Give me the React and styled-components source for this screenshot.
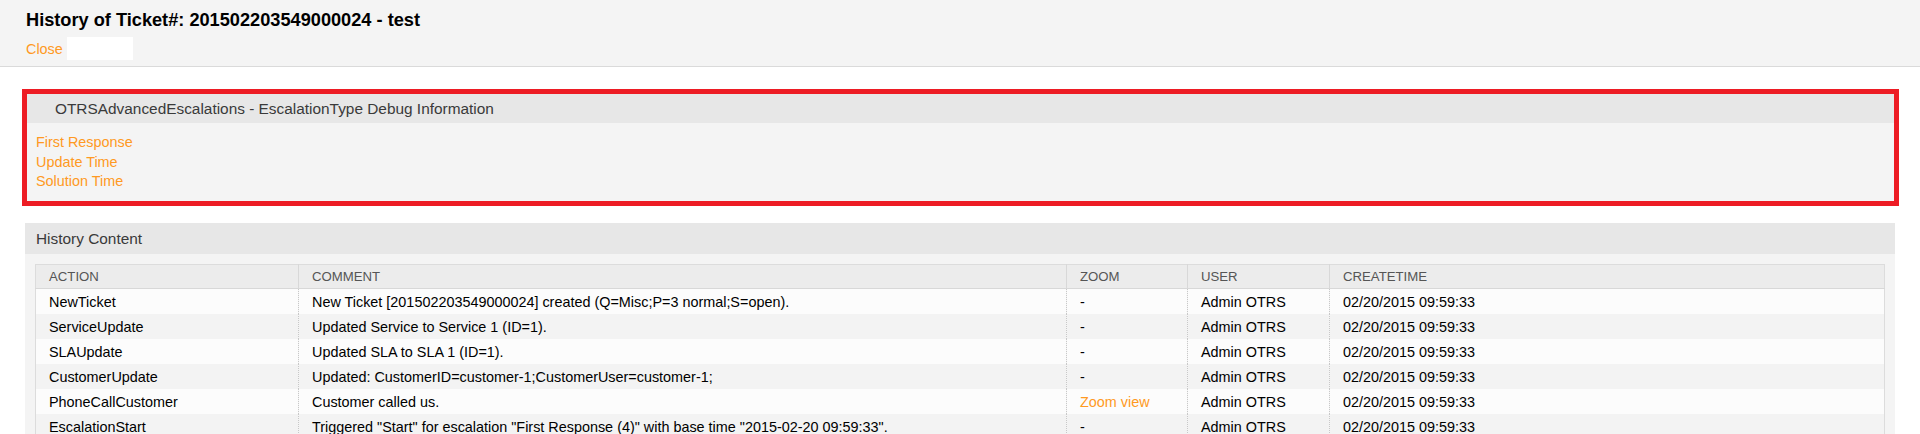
import React from "react";
import styled, { createGlobalStyle } from "styled-components";

const GlobalStyle = createGlobalStyle`
  html, body {
    margin: 0;
    padding: 0;
    background: #ffffff;
    font-family: "Liberation Sans", Arial, sans-serif;
    font-size: 14.4px;
    color: #000;
  }
`;

const Page = styled.div`
  width: 1920px;
  min-height: 434px;
`;

const Header = styled.header`
  background: #f4f4f4;
  border-bottom: 1px solid #dadada;
  padding: 10px 26px 6px;
`;

const Title = styled.h1`
  margin: 0 0 6px;
  font-size: 18.2px;
  line-height: 21px;
  font-weight: bold;
  color: #000;
`;

const ActionRow = styled.div`
  display: flex;
  align-items: center;
  gap: 4px;
  height: 23px;
`;

const Link = styled.a`
  color: #ff9922;
  text-decoration: none;
  font-size: 14.4px;
  cursor: pointer;
`;

const BlankField = styled.span`
  display: inline-block;
  width: 66px;
  height: 23px;
  background: #ffffff;
`;

const Content = styled.main`
  padding: 22px 25px 0;
  display: flex;
  flex-direction: column;
  gap: 17px;
`;

const Widget = styled.section`
  background: #f4f4f4;
  ${(p) =>
    p.$highlight &&
    `
    border: 5px solid #ed1c24;
    margin: 0 -4px 0 -3px;
  `}
`;

const WidgetHeader = styled.div`
  display: flex;
  align-items: center;
  height: ${(p) => p.$height}px;
  padding-left: ${(p) => p.$indent}px;
  background: #e7e7e7;
  color: #3a3a3a;
  font-size: 15.4px;
`;

const DebugBody = styled.div`
  padding: 10px 9px 9.5px;
  display: flex;
  flex-direction: column;
`;

const DebugLink = styled(Link)`
  line-height: 19.5px;
`;

const HistoryBody = styled.div`
  padding: 10px 11px 10px 10px;
`;

const Table = styled.table`
  width: 100%;
  table-layout: fixed;
  border-collapse: collapse;
  border: 1px solid #dcdcdc;
`;

const Th = styled.th`
  height: 23px;
  padding: 0 13px;
  text-align: left;
  font-weight: normal;
  font-size: 13.2px;
  color: #555;
  background: #ececec;
  border-right: 1px solid #d8d8d8;
  border-bottom: 1px solid #d8d8d8;
  text-transform: uppercase;
  &:last-child {
    border-right: none;
  }
`;

const Row = styled.tr`
  background: ${(p) => (p.$odd ? "#f3f3f3" : "#fcfcfc")};
`;

const Td = styled.td`
  height: 25px;
  padding: 0 13px;
  font-size: 14.4px;
  color: #000;
  white-space: nowrap;
  overflow: hidden;
  border-right: 1px dotted #c8c8c8;
  &:last-child {
    border-right: none;
  }
`;

const columns = [
  { key: "action", label: "Action", width: 263 },
  { key: "comment", label: "Comment", width: 768 },
  { key: "zoom", label: "Zoom", width: 121 },
  { key: "user", label: "User", width: 142 },
  { key: "time", label: "CreateTime", width: 555 },
];

const rows = [
  {
    action: "NewTicket",
    comment: "New Ticket [201502203549000024] created (Q=Misc;P=3 normal;S=open).",
    zoom: null,
  },
  { action: "ServiceUpdate", comment: "Updated Service to Service 1 (ID=1).", zoom: null },
  { action: "SLAUpdate", comment: "Updated SLA to SLA 1 (ID=1).", zoom: null },
  {
    action: "CustomerUpdate",
    comment: "Updated: CustomerID=customer-1;CustomerUser=customer-1;",
    zoom: null,
  },
  { action: "PhoneCallCustomer", comment: "Customer called us.", zoom: "Zoom view" },
  {
    action: "EscalationStart",
    comment:
      'Triggered "Start" for escalation "First Response (4)" with base time "2015-02-20 09:59:33".',
    zoom: null,
  },
];

export default function App() {
  return (
    <Page>
      <GlobalStyle />
      <Header>
        <Title>History of Ticket#: 201502203549000024 - test</Title>
        <ActionRow>
          <Link>Close</Link>
          <BlankField />
        </ActionRow>
      </Header>
      <Content>
        <Widget $highlight>
          <WidgetHeader $height={29} $indent={28}>
            OTRSAdvancedEscalations - EscalationType Debug Information
          </WidgetHeader>
          <DebugBody>
            <DebugLink>First Response</DebugLink>
            <DebugLink>Update Time</DebugLink>
            <DebugLink>Solution Time</DebugLink>
          </DebugBody>
        </Widget>
        <Widget>
          <WidgetHeader $height={31} $indent={11}>
            History Content
          </WidgetHeader>
          <HistoryBody>
            <Table>
              <colgroup>
                {columns.map((c) => (
                  <col key={c.key} style={{ width: c.width }} />
                ))}
              </colgroup>
              <thead>
                <tr>
                  {columns.map((c) => (
                    <Th key={c.key}>{c.label}</Th>
                  ))}
                </tr>
              </thead>
              <tbody>
                {rows.map((r, i) => (
                  <Row key={i} $odd={i % 2 === 1}>
                    <Td>{r.action}</Td>
                    <Td>{r.comment}</Td>
                    <Td>{r.zoom ? <Link>{r.zoom}</Link> : "-"}</Td>
                    <Td>Admin OTRS</Td>
                    <Td>02/20/2015 09:59:33</Td>
                  </Row>
                ))}
              </tbody>
            </Table>
          </HistoryBody>
        </Widget>
      </Content>
    </Page>
  );
}
